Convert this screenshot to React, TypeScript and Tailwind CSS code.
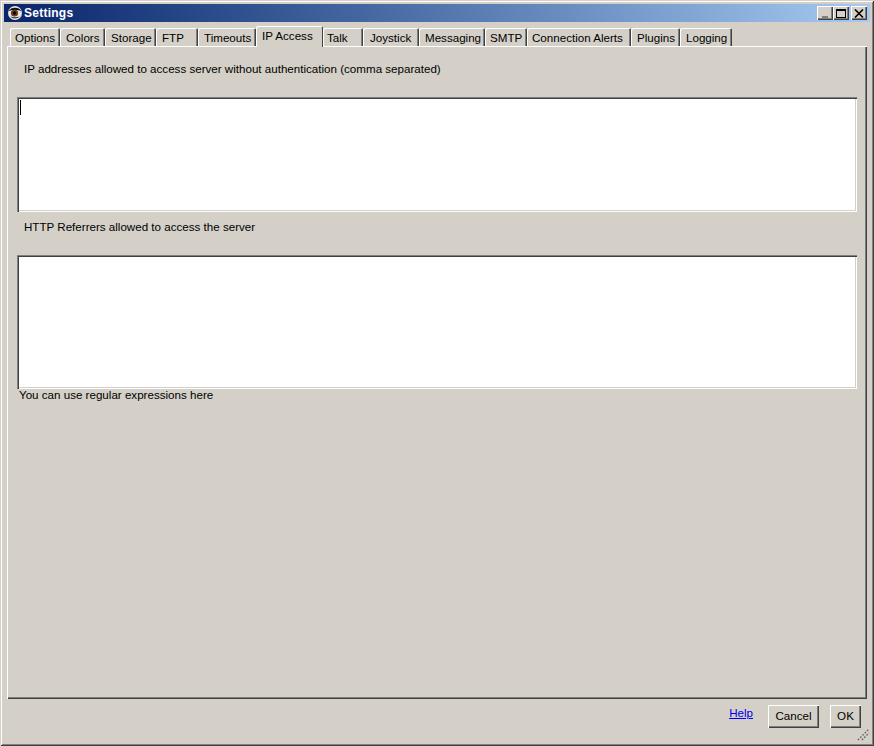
const tabs = [
  { label: "Options", width: "w-[50px]" },
  { label: "Colors", width: "w-[45px]", pad: "pl-[6px]" },
  { label: "Storage", width: "w-[51px]", pad: "pl-[6px]" },
  { label: "FTP", width: "w-[42px]", pad: "pl-[6px]" },
  { label: "Timeouts", width: "w-[58px]", pad: "pl-[6px]" },
  { label: "IP Access", width: "w-[67px]", active: true },
  { label: "Talk", width: "w-[40px]", pad: "pl-[4px]" },
  { label: "Joystick", width: "w-[56px]", pad: "pl-[7px]" },
  { label: "Messaging", width: "w-[66px]", pad: "pl-[6px]" },
  { label: "SMTP", width: "w-[42px]" },
  { label: "Connection Alerts", width: "w-[104px]" },
  { label: "Plugins", width: "w-[49px]", pad: "pl-[6px]" },
  { label: "Logging", width: "w-[52px]", pad: "pl-[6px]" },
];

const raised =
  "shadow-[inset_1px_1px_0_#ffffff,inset_-1px_-1px_0_#404040,inset_-2px_-2px_0_#808080]";

function EyeIcon() {
  return (
    <svg width="16" height="16" viewBox="0 0 16 16" className="shrink-0">
      <circle cx="8" cy="8" r="7" fill="#e4e4e4" />
      <path d="M1.5 6 C4 1.5 12 1.5 14.5 6 C12 4.5 4 4.5 1.5 6 Z" fill="#101010" />
      <path d="M3 11.5 C6 14 10 14 13 11.5 C10 12.5 6 12.5 3 11.5 Z" fill="#303030" />
      <circle cx="7.5" cy="8" r="3.6" fill="#6a3a20" />
      <circle cx="7.5" cy="8" r="1.7" fill="#000000" />
    </svg>
  );
}

function WinButton({ children, className = "" }: { children: React.ReactNode; className?: string }) {
  return (
    <div className={`w-[16px] h-[14px] bg-[#d4d0c8] ${raised} flex items-center justify-center ${className}`}>
      {children}
    </div>
  );
}

function TextBox({ height, caret }: { height: string; caret?: boolean }) {
  return (
    <div
      className={`${height} bg-white shadow-[inset_1px_1px_0_#808080,inset_2px_2px_0_#404040,inset_-1px_-1px_0_#ffffff,inset_-2px_-2px_0_#d4d0c8] pt-[3px] pl-[3px]`}
    >
      {caret && <div className="w-px h-[15px] bg-black" />}
    </div>
  );
}

export default function App() {
  return (
    <div
      className="w-[874px] h-[746px] flex flex-col p-[4px] bg-[#d4d0c8] text-black text-[11.6px] leading-[14px] overflow-hidden shadow-[inset_1px_1px_0_#d4d0c8,inset_-1px_-1px_0_#404040,inset_2px_2px_0_#ffffff,inset_-2px_-2px_0_#808080]"
      style={{ fontFamily: '"Liberation Sans", Arial, sans-serif' }}
    >
      {/* title bar */}
      <div className="h-[18px] shrink-0 flex items-center pl-[3px] pr-[3px] bg-gradient-to-r from-[#0a246a] to-[#a6caf0]">
        <EyeIcon />
        <span className="ml-[1px] text-white font-bold text-[12px] tracking-[0.25px]">Settings</span>
        <div className="ml-auto flex">
          <WinButton>
            <div className="w-[6px] h-[2px] bg-[#808080] mt-[7px] -ml-[1px]" />
          </WinButton>
          <WinButton>
            <div className="w-[10px] h-[9px] border border-black border-t-2" />
          </WinButton>
          <WinButton className="ml-[2px]">
            <svg width="10" height="9" viewBox="0 0 10 9">
              <path d="M1 0.5 L9 8.5 M9 0.5 L1 8.5" stroke="#000" strokeWidth="1.6" />
            </svg>
          </WinButton>
        </div>
      </div>

      {/* tabs */}
      <div className="h-[24px] shrink-0 flex items-end pl-[6px]">
        {tabs.map((t) =>
          t.active ? (
            <div
              key={t.label}
              className={`${t.width} h-[21px] pl-[6px] pt-[3px] bg-[#d4d0c8] rounded-t-[2px] shadow-[inset_1px_1px_0_#ffffff,inset_-1px_0_0_#404040] -mb-px relative z-10`}
            >
              {t.label}
            </div>
          ) : (
            <div
              key={t.label}
              className={`${t.width} h-[18px] ${t.pad ?? "pl-[5px]"} pt-[3px] bg-[#d4d0c8] rounded-t-[2px] shadow-[inset_1px_1px_0_#ffffff,inset_-1px_0_0_#404040,inset_-2px_0_0_#808080]`}
            >
              {t.label}
            </div>
          )
        )}
      </div>

      {/* panel */}
      <div className="ml-[3px] mr-[3px] h-[653px] shrink-0 pt-[16px] pl-[10px] pr-[10px] shadow-[inset_1px_1px_0_#ffffff,inset_-1px_-1px_0_#404040,inset_-2px_-2px_0_#808080]">
        <div className="pl-[7px] h-[35px]">IP addresses allowed to access server without authentication (comma separated)</div>
        <TextBox height="h-[115px]" caret />
        <div className="pl-[7px] pt-[8px] h-[43px]">HTTP Referrers allowed to access the server</div>
        <TextBox height="h-[134px]" />
        <div className="pl-[2px] -mt-px">You can use regular expressions here</div>
      </div>

      {/* footer */}
      <div className="relative flex-1 flex items-start justify-end pt-[6px] pr-[9px]">
        <a href="#" className="mt-[1px] mr-[15px] text-[#0000ee] underline">Help</a>
        <button className={`w-[51px] h-[23px] pb-[1px] bg-[#d4d0c8] ${raised}`}>Cancel</button>
        <button className={`ml-[11px] w-[31px] h-[23px] pb-[1px] bg-[#d4d0c8] ${raised}`}>OK</button>
        <svg width="14" height="14" viewBox="0 0 14 14" className="absolute right-0 bottom-0">
          <path d="M2 12 L13 1 M6 12 L13 5" stroke="#666666" strokeWidth="1.4" strokeDasharray="1.6 1.6" />
        </svg>
      </div>
    </div>
  );
}
